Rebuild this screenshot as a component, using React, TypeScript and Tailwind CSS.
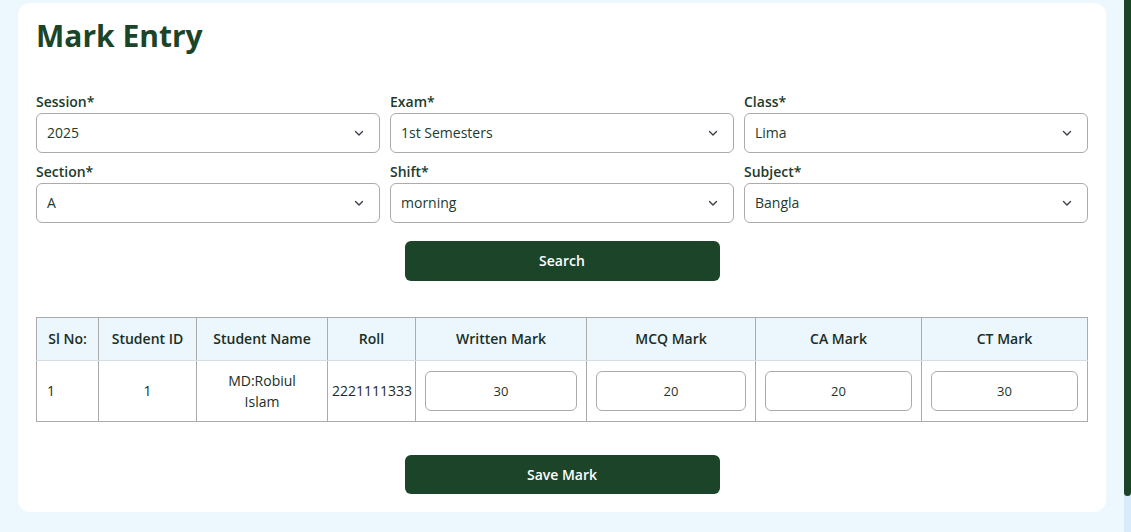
import React from "react";

const font = { fontFamily: '"Open Sans", "Liberation Sans", sans-serif' };

const filters = [
  { label: "Session*", value: "2025" },
  { label: "Exam*", value: "1st Semesters" },
  { label: "Class*", value: "Lima" },
  { label: "Section*", value: "A" },
  { label: "Shift*", value: "morning" },
  { label: "Subject*", value: "Bangla" },
];

const columns = [
  { name: "Sl No:", w: "w-[62px]" },
  { name: "Student ID", w: "w-[98px]" },
  { name: "Student Name", w: "w-[131px]" },
  { name: "Roll", w: "w-[88px]" },
  { name: "Written Mark", w: "w-[171px]" },
  { name: "MCQ Mark", w: "w-[169px]" },
  { name: "CA Mark", w: "w-[166px]" },
  { name: "CT Mark", w: "w-[166px]" },
];

const marks = ["30", "20", "20", "30"];

const Chevron = () => (
  <svg width="12" height="12" viewBox="0 0 12 12" fill="none" className="text-[#3a3d4a]">
    <path d="M2.5 4.5 L6 8 L9.5 4.5" stroke="currentColor" strokeWidth="1.4" strokeLinecap="round" strokeLinejoin="round" />
  </svg>
);

const SelectBox: React.FC<{ label: string; value: string }> = ({ label, value }) => (
  <div className="flex flex-col">
    <label className="h-5 mb-[1px] text-sm font-semibold leading-5 text-[#1c3b2a]">{label}</label>
    <div className="h-10 flex items-center justify-between border border-[#ababab] rounded-[6px] pl-[10px] pr-[14px] bg-white">
      <span className="text-sm text-[#223a30]">{value}</span>
      <Chevron />
    </div>
  </div>
);

export default function App() {
  return (
    <div style={font} className="h-screen flex bg-[#edf7fe] overflow-hidden">
      <div className="flex-1 pt-[3px] px-[18px]">
        <div className="bg-white rounded-[12px] px-[18px] pt-[15px] pb-[18px]">
          <h1 className="text-[30px] leading-9 font-bold text-[#1b4429]">Mark Entry</h1>

          <div className="mt-[38px] grid grid-cols-3 gap-x-[10px] gap-y-[9px]">
            {filters.map((f) => (
              <SelectBox key={f.label} label={f.label} value={f.value} />
            ))}
          </div>

          <div className="mt-[18px] flex justify-center">
            <button className="w-[315px] h-10 rounded-[6px] bg-[#1b4429] text-white text-sm font-semibold">
              Search
            </button>
          </div>

          <table className="mt-[36px] w-full table-fixed border-collapse text-sm text-[#1a2e24]">
            <thead>
              <tr className="bg-[#ebf6fd]">
                {columns.map((c) => (
                  <th
                    key={c.name}
                    className={`${c.w} h-[43px] border-x border-t border-[#ababab] border-b border-b-[#d6dde3] font-semibold text-center px-1`}
                  >
                    {c.name}
                  </th>
                ))}
              </tr>
            </thead>
            <tbody>
              <tr className="h-[61px]">
                <td className="border border-[#ababab] px-[10px] text-left">1</td>
                <td className="border border-[#ababab] text-center">1</td>
                <td className="border border-[#ababab] text-center leading-[21px]">
                  MD:Robiul
                  <br />
                  Islam
                </td>
                <td className="border border-[#ababab] text-center whitespace-nowrap px-1">2221111333</td>
                {marks.map((m, i) => (
                  <td key={i} className="border border-[#ababab] px-[9px] py-[10px]">
                    <input
                      readOnly
                      value={m}
                      className="w-full h-10 border border-[#ababab] rounded-[6px] text-center text-[13px] text-[#1f3329] outline-none"
                    />
                  </td>
                ))}
              </tr>
            </tbody>
          </table>

          <div className="mt-[33px] flex justify-center">
            <button className="w-[315px] h-[39px] rounded-[6px] bg-[#1b4429] text-white text-sm font-semibold">
              Save Mark
            </button>
          </div>
        </div>
      </div>
      {/* page scrollbar */}
      <div className="w-2 bg-[#d9ebfa]">
        <div className="h-[496px] bg-[#1b4429] rounded-b-[4px]" />
      </div>
    </div>
  );
}
